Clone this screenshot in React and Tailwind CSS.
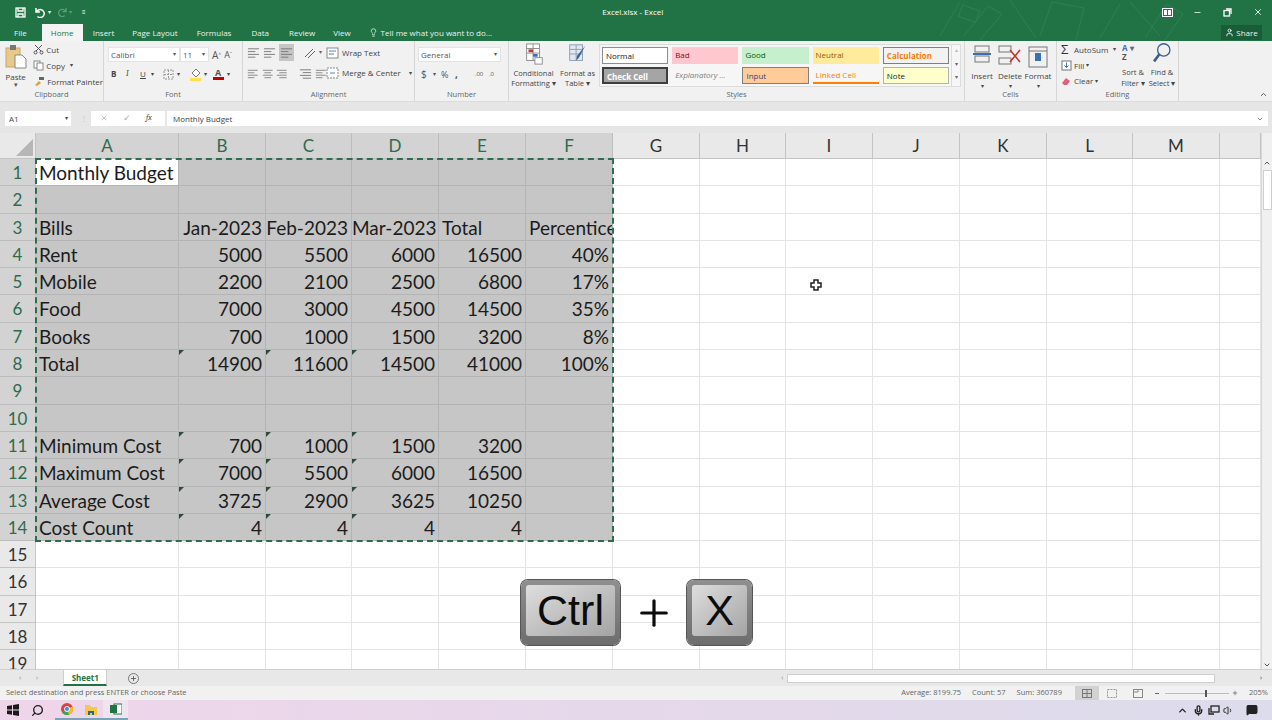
import React from "react";
import { Search, ChevronUp, ChevronDown, Lightbulb, User, Minus, X, Plus, Mic, Volume1, MessageSquare } from "lucide-react";

const ui = "font-['Open_Sans','Liberation_Sans',sans-serif]";

const cols = ["A", "B", "C", "D", "E", "F", "G", "H", "I", "J", "K", "L", "M", ""];

const rows = [
  ["Monthly Budget"],
  [],
  ["Bills", "Jan-2023", "Feb-2023", "Mar-2023", "!Total", "!Percentice"],
  ["Rent", "5000", "5500", "6000", "16500", "40%"],
  ["Mobile", "2200", "2100", "2500", "6800", "17%"],
  ["Food", "7000", "3000", "4500", "14500", "35%"],
  ["Books", "700", "1000", "1500", "3200", "8%"],
  ["Total", "^14900", "^11600", "^14500", "41000", "100%"],
  [],
  [],
  ["Minimum Cost", "^700", "^1000", "^1500", "3200"],
  ["Maximum Cost", "^7000", "^5500", "^6000", "16500"],
  ["Average Cost", "^3725", "^2900", "^3625", "10250"],
  ["Cost Count", "^4", "^4", "^4", "4"],
];

const tabs = [
  ["Insert", "ml-[10px]"],
  ["Page Layout", "ml-[18px]"],
  ["Formulas", "ml-[19px]"],
  ["Data", "ml-[20px]"],
  ["Review", "ml-[20px]"],
  ["View", "ml-[18px]"],
];

const styleCells = [
  ["Normal", "bg-white border border-[#8d8d8d] text-[#222]"],
  ["Bad", "bg-[#ffc7ce] text-[#9c0006]"],
  ["Good", "bg-[#c6efce] text-[#006100]"],
  ["Neutral", "bg-[#ffeb9c] text-[#9c5700]"],
  ["Calculation", "bg-[#f2f2f2] border border-[#7f7f7f] text-[#fa7d00] font-bold"],
  ["Check Cell", "bg-[#a5a5a5] border-2 border-[#3f3f3f] text-white font-bold"],
  ["Explanatory ...", "text-[#7f7f7f] italic"],
  ["Input", "bg-[#ffcc99] border border-[#7f7f7f] text-[#3f3f76]"],
  ["Linked Cell", "text-[#fa7d00] border-b-2 border-[#ff8001]"],
  ["Note", "bg-[#ffffcc] border border-[#b2b2b2] text-[#222]"],
];

const GroupLabel = ({ children }) => (
  <div className="relative h-[13px] shrink-0 text-center text-[7.5px] leading-[13px] text-[#666]">
    {children}
  </div>
);

const Group = ({ w, label, children, border = true }) => (
  <div className={`flex flex-col shrink-0 ${w} ${border ? "border-r border-[#d6d6d6]" : ""}`}>
    <div className="flex-1 min-h-0 flex">{children}</div>
    <GroupLabel>{label}</GroupLabel>
  </div>
);

const Lines = ({ kind }) => {
  const ys = [3, 6, 9, 12];
  const x = (i) => {
    if (kind === "left") return [1, 1, 1, 1][i];
    if (kind === "center") return [1, 3, 1, 3][i];
    return [1, 4, 1, 4][i];
  };
  return (
    <svg width="13" height="14" viewBox="0 0 14 15" stroke="#777" strokeWidth="1">
      {ys.map((y, i) => (
        <line key={y} x1={x(i)} x2={kind === "left" ? (i % 2 ? 9 : 13) : kind === "center" ? (i % 2 ? 11 : 13) : 13} y1={y} y2={y} />
      ))}
    </svg>
  );
};

const BigCells = ({ children }) => (
  <svg width="26" height="26" viewBox="0 0 26 26" fill="none" stroke="#777" strokeWidth="1">
    {children}
  </svg>
);

const Clipboard = () => (
  <Group w="w-[104px]" label="Clipboard">
    <div className="w-[32px] flex flex-col items-center pt-[3px]">
      <svg width="22" height="25" viewBox="0 0 22 25">
        <rect x="1" y="4" width="14" height="19" fill="#e8c98c" stroke="#c9a868" />
        <rect x="5" y="1" width="6" height="5" fill="#777" />
        <path d="M10 11h7l4 4v9H10z" fill="#fff" stroke="#888" />
      </svg>
      <div className="mt-[3px] text-[8px] leading-[9px] text-[#444]">Paste</div>
      <div className="text-[7px] leading-[7px] text-[#555]">▾</div>
    </div>
    <div className="flex flex-col text-[8px] text-[#444] pt-[2px] pl-[2px] gap-[3px]">
      <div className="flex items-center gap-[2px] h-[13px]">
        <svg width="11" height="11" viewBox="0 0 11 11" fill="none" stroke="#555">
          <path d="M2 1l6 6M9 1L3 7" />
          <circle cx="2.5" cy="8.5" r="1.5" />
          <circle cx="8.5" cy="8.5" r="1.5" />
        </svg>
        Cut
      </div>
      <div className="flex items-center gap-[2px] h-[13px]">
        <svg width="11" height="11" viewBox="0 0 11 11" fill="#fff" stroke="#888">
          <rect x="1" y="1" width="6" height="7" />
          <rect x="4" y="3" width="6" height="7" />
        </svg>
        Copy <span className="ml-[3px] text-[6px]">▾</span>
      </div>
      <div className="flex items-center gap-[2px] h-[13px] pl-[1px] whitespace-nowrap">
        <svg width="11" height="11" viewBox="0 0 11 11">
          <path d="M1 9l4-4 2 2-4 3z" fill="#d9a441" />
          <rect x="5" y="1" width="5" height="3" fill="#666" />
        </svg>
        Format Painter
      </div>
    </div>
  </Group>
);

const Font = () => (
  <Group w="w-[139px]" label="Font">
    <div className="flex flex-col pl-[4px] pt-[6px] gap-[4px] text-[#555]">
      <div className="flex items-center h-[15px]">
        <div className="w-[72px] h-[15px] bg-white border border-[#e3e3e3] text-[8px] leading-[13px] pl-[2px] flex justify-between pr-[3px]">
          Calibri <span className="text-[6px]">▾</span>
        </div>
        <div className="w-[29px] h-[15px] bg-white border border-[#e3e3e3] text-[8px] leading-[13px] pl-[2px] flex justify-between pr-[3px]">
          11 <span className="text-[6px]">▾</span>
        </div>
        <span className="ml-[3px] text-[10px] leading-none">A<sup className="text-[5px]">^</sup></span>
        <span className="ml-[3px] text-[9px] leading-none">A<sup className="text-[5px]">ˇ</sup></span>
      </div>
      <div className="flex items-center h-[16px] pl-[3px] text-[8px] text-[#444]">
        <b className="w-[15px]">B</b>
        <i className="w-[14px] font-serif">I</i>
        <u className="w-[11px]">U</u>
        <span className="w-[12px] text-[6px]">▾</span>
        <svg width="11" height="11" viewBox="0 0 11 11" fill="none" stroke="#999" strokeDasharray="2 1">
          <rect x="1" y="1" width="9" height="9" />
          <path d="M1 5.5h9M5.5 1v9" />
        </svg>
        <span className="w-[16px] pl-[3px] text-[6px]">▾</span>
        <svg width="12" height="13" viewBox="0 0 12 13">
          <path d="M6 1l4 4-4 4-4-4z" fill="#fff" stroke="#777" />
          <rect y="10" width="11" height="3" fill="#ffe14d" />
        </svg>
        <span className="w-[10px] pl-[2px] text-[6px]">▾</span>
        <span className="flex flex-col items-center w-[12px] text-[9px] leading-[9px] font-bold text-[#555]">
          A<span className="block w-[11px] h-[3px] bg-[#c00000]" />
        </span>
        <span className="pl-[3px] text-[6px]">▾</span>
      </div>
    </div>
  </Group>
);

const Alignment = () => (
  <Group w="w-[172px]" label="Alignment">
    <div className="flex flex-col pl-[4px] pt-[3px] gap-[4px] w-[83px]">
      <div className="flex items-center gap-[3px] h-[17px]">
        <Lines kind="left" />
        <Lines kind="left" />
        <div className="w-[15px] h-[17px] bg-[#c6c6c6] flex items-center justify-center">
          <Lines kind="left" />
        </div>
        <span className="ml-[7px] flex items-center text-[#666]">
          <svg width="13" height="12" viewBox="0 0 13 12" fill="none" stroke="#666">
            <path d="M1 10l8-8M4 11l7-7" />
          </svg>
          <span className="text-[6px] ml-[2px]">▾</span>
        </span>
      </div>
      <div className="flex items-center gap-[3px] h-[17px]">
        <Lines kind="left" />
        <Lines kind="center" />
        <Lines kind="right" />
        <span className="ml-[8px]"><Lines kind="right" /></span>
        <Lines kind="left" />
      </div>
    </div>
    <div className="flex flex-col pt-[5px] gap-[6px] text-[8px] text-[#444] whitespace-nowrap">
      <div className="flex items-center gap-[3px] h-[14px]">
        <svg width="13" height="12" viewBox="0 0 13 12" fill="#fff" stroke="#888">
          <rect x="1" y="1" width="11" height="10" />
          <path d="M3 4h7M3 7h5" stroke="#4a86c5" />
        </svg>
        Wrap Text
      </div>
      <div className="flex items-center gap-[3px] h-[14px]">
        <svg width="13" height="12" viewBox="0 0 13 12" fill="#fff" stroke="#888">
          <rect x="1" y="1" width="11" height="10" strokeDasharray="2 1" />
          <path d="M4 6h5" stroke="#4a86c5" />
        </svg>
        Merge &amp; Center <span className="ml-[5px] text-[6px]">▾</span>
      </div>
    </div>
  </Group>
);

const NumberGroup = () => (
  <Group w="w-[94px]" label="Number">
    <div className="flex flex-col pl-[3px] pt-[6px] gap-[5px] text-[#555]">
      <div className="w-[83px] h-[15px] bg-white border border-[#e3e3e3] text-[8px] leading-[13px] pl-[2px] pr-[3px] flex justify-between">
        General <span className="text-[6px]">▾</span>
      </div>
      <div className="flex items-center h-[15px] pl-[3px] text-[10px]">
        <span className="w-[12px]">$</span>
        <span className="w-[8px] text-[6px]">▾</span>
        <span className="w-[14px] text-[9px]">%</span>
        <span className="w-[20px] text-[10px] font-bold">,</span>
        <span className="w-[14px] text-[6px] tracking-tight">.00</span>
        <span className="text-[6px] tracking-tight">.0</span>
      </div>
    </div>
  </Group>
);

const Styles = () => (
  <Group w="w-[456px]" label="Styles">
    <div className="w-[49px] flex flex-col items-center pt-[2px] text-[7.5px] leading-[10px] text-[#444] text-center">
      <svg width="20" height="24" viewBox="0 0 20 24" fill="#fff" stroke="#888">
        <rect x="2" y="1" width="14" height="18" />
        <path d="M2 6h14M2 11h14M9 1v18" />
        <rect x="4" y="7" width="5" height="3" fill="#c0392b" stroke="none" />
        <rect x="9" y="12" width="5" height="3" fill="#3b6fb5" stroke="none" />
        <rect x="11" y="16" width="8" height="7" fill="#fff" />
      </svg>
      <div className="mt-[3px] whitespace-nowrap">Conditional</div>
      <div className="whitespace-nowrap">Formatting ▾</div>
    </div>
    <div className="w-[39px] flex flex-col items-center pt-[2px] text-[7.5px] leading-[10px] text-[#444] text-center">
      <svg width="21" height="24" viewBox="0 0 21 24" fill="#dfe8f3" stroke="#8a9bb0">
        <rect x="2" y="2" width="14" height="17" />
        <path d="M2 7h14M2 12h14M9 2v17" />
        <path d="M19 3l-7 13-3 3 1-5z" fill="#3b5f8f" stroke="none" />
      </svg>
      <div className="mt-[3px] whitespace-nowrap">Format as</div>
      <div className="whitespace-nowrap">Table ▾</div>
    </div>
    <div className="ml-[2px] mt-[3px] mb-[1px] w-[362px] flex border border-[#dcdcdc] bg-[#f6f6f6]">
      <div className="flex-1 grid grid-cols-5 grid-rows-2 gap-x-[4px] gap-y-[3px] p-[2px]">
        {styleCells.map(([name, cls]) => (
          <div key={name} className={`text-[8px] leading-[15px] pl-[3px] whitespace-nowrap overflow-hidden ${cls}`}>
            {name}
          </div>
        ))}
      </div>
      <div className="w-[9px] flex flex-col border-l border-[#dcdcdc] text-[6px] text-center text-[#666] leading-[11px]">
        <span className="flex-1 text-[#bbb]">▴</span>
        <span className="flex-1">▾</span>
        <span className="flex-1">▾</span>
      </div>
    </div>
  </Group>
);

const CellBtn = ({ label, children }) => (
  <div className="w-[28px] flex flex-col items-center pt-[3px] text-[8px] leading-[11px] text-[#444]">
    <div className="h-[26px]">{children}</div>
    <div>{label}</div>
    <div className="text-[6px] leading-[10px]">▾</div>
  </div>
);

const Cells = () => (
  <Group w="w-[92px]" label="Cells">
    <div className="flex pl-[3px]">
      <CellBtn label="Insert">
        <BigCells>
          <rect x="6" y="2" width="14" height="6" />
          <rect x="6" y="12" width="14" height="6" />
          <path d="M4 10h18" stroke="#3b6fb5" strokeWidth="2" />
        </BigCells>
      </CellBtn>
      <CellBtn label="Delete">
        <BigCells>
          <rect x="2" y="2" width="12" height="6" />
          <rect x="2" y="14" width="12" height="6" />
          <path d="M13 6l10 12M23 6L13 18" stroke="#c0392b" strokeWidth="1.6" />
        </BigCells>
      </CellBtn>
      <CellBtn label="Format">
        <BigCells>
          <rect x="4" y="3" width="18" height="20" />
          <path d="M4 7h18" />
          <rect x="10" y="9" width="6" height="8" fill="#3b6fb5" stroke="none" />
        </BigCells>
      </CellBtn>
    </div>
  </Group>
);

const Editing = () => (
  <Group w="w-[122px]" label="Editing">
    <div className="flex flex-col pl-[4px] pt-[2px] w-[62px] text-[8px] text-[#444] gap-[2px]">
      <div className="flex items-center h-[14px] whitespace-nowrap">
        <span className="text-[13px] leading-none w-[13px] text-[#333]">Σ</span>AutoSum
        <span className="ml-[5px] text-[6px]">▾</span>
      </div>
      <div className="flex items-center h-[14px] gap-[2px]">
        <svg width="11" height="11" viewBox="0 0 11 11" fill="#fff" stroke="#777">
          <rect x="1" y="1" width="9" height="9" />
          <path d="M5.5 2.5v5M3.5 5.5l2 2 2-2" stroke="#3b6fb5" />
        </svg>
        Fill <span className="text-[6px]">▾</span>
      </div>
      <div className="flex items-center h-[14px] gap-[2px]">
        <svg width="11" height="11" viewBox="0 0 11 11">
          <path d="M1 7l4-5 4 3-3 4H3z" fill="#e0607a" />
        </svg>
        Clear <span className="text-[6px]">▾</span>
      </div>
    </div>
    <div className="w-[28px] flex flex-col items-center pt-[2px] text-[7.5px] leading-[10.5px] text-[#444]">
      <div className="h-[24px] w-[22px] text-[8px] leading-[9px] font-bold">
        <span className="text-[#3b6fb5]">A</span>
        <span className="text-[#666]"> ▾</span>
        <br />
        <span className="text-[#555]">Z</span>
      </div>
      <div className="mt-[3px] whitespace-nowrap">Sort &amp;</div>
      <div className="whitespace-nowrap">Filter ▾</div>
    </div>
    <div className="w-[30px] flex flex-col items-center pt-[1px] text-[7.5px] leading-[10.5px] text-[#444]">
      <svg width="22" height="25" viewBox="0 0 22 25" fill="none" stroke="#3b5f8f">
        <circle cx="13" cy="9" r="7" strokeWidth="1.5" />
        <path d="M8 14l-6 8" strokeWidth="3" />
      </svg>
      <div className="mt-[3px] whitespace-nowrap">Find &amp;</div>
      <div className="whitespace-nowrap">Select ▾</div>
    </div>
  </Group>
);

const Doodles = () => (
  <svg width="300" height="41" viewBox="0 0 300 41" fill="none" stroke="#2c8052" strokeWidth="1" className="absolute right-[42px] top-0">
    <path d="M10 36L30 2M34 36L58 6l14 8-22 26M80 0l26 38M110 36l12-34 32 6-8 32M170 38L190 4M200 2l30 34M215 38l22-34 16 10-18 26" />
    <rect x="30" y="8" width="18" height="12" transform="rotate(20 40 14)" />
  </svg>
);

const TitleBar = () => (
  <div className="relative h-[41px] bg-[#217346] text-white shrink-0">
    <Doodles />
    <div className="relative flex items-center h-[24px]">
      <svg width="11" height="11" viewBox="0 0 11 11" fill="none" stroke="#fff" strokeWidth="1.3" className="ml-[15px]">
        <rect x="1" y="1" width="9" height="9" />
        <path d="M3 1v3h5V1M3 10V7h5v3" />
      </svg>
      <svg width="11" height="11" viewBox="0 0 11 11" fill="none" stroke="#fff" strokeWidth="1.5" className="ml-[9px]">
        <path d="M1 1v4h4M1.500 5a4 4 0 1 1 1 4.500" />
      </svg>
      <span className="ml-[2px] text-[6px]">▾</span>
      <svg width="10" height="10" viewBox="0 0 11 11" fill="none" stroke="#5f9e7d" strokeWidth="1.3" className="ml-[6px]">
        <path d="M10 1v4H6M9.500 5a4 4 0 1 0-1 4.500" />
      </svg>
      <span className="ml-[2px] text-[6px] text-[#5f9e7d]">▾</span>
      <span className="ml-[10px] text-[6px]">≡</span>
      <div className="flex-1 text-center text-[8px] pl-[28px] whitespace-nowrap">Excel.xlsx - Excel</div>
      <div className="flex items-center w-[120px]">
        <svg width="11" height="9" viewBox="0 0 11 9" fill="none" stroke="#fff" className="ml-[10px]">
          <rect x="0.500" y="0.500" width="10" height="8" />
          <rect x="2" y="2" width="3" height="5" fill="#fff" stroke="none" />
          <rect x="6" y="2" width="3" height="5" fill="#fff" stroke="none" />
        </svg>
        <Minus size={9} strokeWidth={2} className="ml-[20px]" />
        <svg width="9" height="9" viewBox="0 0 9 9" fill="none" stroke="#fff" strokeWidth="1.300" className="ml-[21px]">
          <rect x="1" y="2.500" width="5.500" height="5.500" />
          <path d="M3 1h5v5" />
        </svg>
        <X size={10} strokeWidth={2} className="ml-[21px]" />
      </div>
    </div>
    <div className="relative flex items-center h-[17px] text-[8px] text-[#e8f2ec] whitespace-nowrap">
      <span className="ml-[14px]">File</span>
      <span className="ml-[15px] w-[41px] h-[17px] bg-[#f3f3f3] text-[#217346] text-center leading-[17px]">Home</span>
      {tabs.map(([t, m]) => (
        <span key={t} className={m}>{t}</span>
      ))}
      <span className="ml-[18px] flex items-center gap-[3px]">
        <Lightbulb size={9} />
        Tell me what you want to do...
      </span>
      <span className="ml-auto mr-[10px] w-[41px] h-[15px] bg-[#1a5c38] flex items-center justify-center gap-[2px]">
        <User size={9} strokeWidth={2.5} />
        Share
      </span>
    </div>
  </div>
);

const Ribbon = () => (
  <div className="relative h-[61px] shrink-0 bg-[#f1f1f1] flex border-b border-[#dcdcdc]">
    <Clipboard />
    <Font />
    <Alignment />
    <NumberGroup />
    <Styles />
    <Cells />
    <Editing />
    <ChevronUp size={9} strokeWidth={2.5} className="absolute right-[4px] bottom-[2px] text-[#555]" />
  </div>
);

const FormulaBar = () => (
  <div className="h-[31px] shrink-0 bg-[#e6e6e6] flex items-center pl-[5px] pr-[4px] pt-[1px] text-[8px] text-[#444]">
    <div className="w-[66px] h-[15px] bg-white leading-[15px] pl-[4px] pr-[3px] flex justify-between">
      A1 <span className="text-[6px]">▾</span>
    </div>
    <span className="ml-[9px] w-[11px] text-[#c4c4c4]">⋮</span>
    <div className="w-[74px] h-[15px] bg-white flex items-center text-[#aaa] pl-[9px] gap-[15px]">
      <X size={8} />
      <span className="text-[9px]">✓</span>
      <i className="text-[#555] font-serif text-[8px] whitespace-nowrap">fx</i>
    </div>
    <div className="ml-[2px] flex-1 h-[15px] bg-white leading-[15px] pl-[6px] pr-[4px] flex justify-between">
      Monthly Budget
      <ChevronDown size={8} className="mt-[4px] text-[#555]" />
    </div>
  </div>
);

const DataCell = ({ value, row, col }) => {
  const selected = row < 14 && col < 6;
  const white = row === 0 && col === 0;
  let text = value || "";
  const tick = text.startsWith("^");
  const left = col === 0 || text.startsWith("!");
  text = text.replace(/^[\^!]/, "");
  const fill = white ? "bg-white" : selected ? "bg-[#c6c6c6]" : "bg-white";
  const line = selected ? "border-[#b4b4b4]" : "border-[#e4e4e4]";
  return (
    <div
      className={`relative min-w-0 overflow-hidden whitespace-nowrap border-r border-b ${fill} ${line} ${
        left ? "pl-[3px] text-left" : "pr-[3px] text-right"
      } text-[19px] leading-[28px] text-[#1c1c1c]`}
    >
      {text}
      {tick && <span className="absolute left-0 top-0 border-t-[5px] border-r-[5px] border-t-[#2d4a3b] border-r-transparent" />}
    </div>
  );
};

const Sheet = () => {
  const rowNums = Array.from({ length: 19 }, (_, i) => i);
  return (
    <div className="h-[536px] shrink-0 flex bg-white overflow-hidden">
      <div className="relative w-[1261px] shrink-0 grid grid-cols-[36px_143px_87px_86px_87px_87px_87px_87px_86px_87px_87px_87px_86px_87px_41px] grid-rows-[26px_repeat(19,27.3px)] overflow-hidden">
        <div className="bg-[#e9e9e9] border-r border-b border-[#c4c4c4] relative">
          <span className="absolute right-[2px] bottom-[2px] border-b-[17px] border-l-[17px] border-b-[#b6b6b6] border-l-transparent" />
        </div>
        {cols.map((c, i) => (
          <div
            key={c + i}
            className={`text-center text-[17px] leading-[26px] border-r border-b ${
              i < 6 ? "bg-[#d3d3d3] text-[#2f6b4f] border-[#bdbdbd]" : "bg-[#e9e9e9] text-[#333] border-[#c4c4c4]"
            }`}
          >
            {c}
          </div>
        ))}
        {rowNums.map((r) => (
          <React.Fragment key={r}>
            <div
              className={`text-center text-[17px] leading-[28px] border-r border-b ${
                r < 14 ? "bg-[#d3d3d3] text-[#2f6b4f] border-[#bdbdbd]" : "bg-[#e9e9e9] text-[#333] border-[#c4c4c4]"
              }`}
            >
              {r + 1}
            </div>
            {cols.map((c, i) => (
              <DataCell key={i} row={r} col={i} value={rows[r] ? rows[r][i] : ""} />
            ))}
          </React.Fragment>
        ))}
        <div className="absolute left-[35px] top-[25px] w-[579px] h-[384px] border-2 border-dashed border-[#2f6b4f] pointer-events-none" />
        <svg width="12" height="12" viewBox="0 0 12 12" className="absolute left-[810px] top-[146px]">
          <path d="M4 1h4v3h3v4H8v3H4V8H1V4h3z" fill="#fff" stroke="#222" strokeWidth="1.500" />
        </svg>
      </div>
      <div className="flex-1 bg-[#f0f0f0] flex flex-col items-center border-l border-[#d8d8d8] text-[#555]">
        <div className="h-[26px]" />
        <ChevronUp size={8} strokeWidth={3} />
        <div className="mt-[3px] w-[9px] h-[40px] bg-white border border-[#cfcfcf]" />
        <div className="flex-1" />
        <ChevronDown size={8} strokeWidth={3} />
      </div>
    </div>
  );
};

const KeyCap = ({ w, children }) => (
  <div
    className={`${w} h-[65px] rounded-[7px] bg-gradient-to-b from-[#8f8f8f] to-[#6d6d6d] p-[5px] pb-[9px] shadow-[0_0_0_1px_#555]`}
  >
    <div className="h-full rounded-[3px] bg-gradient-to-br from-[#dedede] to-[#a4a4a4] flex items-center justify-center font-['Liberation_Sans',sans-serif] text-[43px] leading-none text-[#0c0c0c]">
      {children}
    </div>
  </div>
);

const Keys = () => (
  <div className="absolute left-[521px] top-[580px] flex items-center">
    <KeyCap w="w-[99px]">Ctrl</KeyCap>
    <div className="w-[67px] flex justify-center text-[#0c0c0c]">
      <Plus size={42} strokeWidth={3.2} absoluteStrokeWidth />
    </div>
    <KeyCap w="w-[65px]">X</KeyCap>
  </div>
);

const SheetTabs = () => (
  <div className="h-[17px] shrink-0 bg-[#e8e8e8] flex items-center border-t border-[#cfcfcf] text-[#888]">
    <span className="ml-[19px] text-[7px]">‹</span>
    <span className="ml-[15px] text-[7px]">›</span>
    <div className="ml-[25px] w-[44px] h-[16px] bg-white text-[#217346] font-bold text-[8px] text-center leading-[15px] border-b-2 border-x border-[#217346] border-x-[#cfcfcf] self-start">
      Sheet1
    </div>
    <div className="ml-[21px] w-[11px] h-[11px] rounded-full border border-[#777] flex items-center justify-center text-[#555]">
      <Plus size={7} strokeWidth={3} />
    </div>
    <div className="ml-[642px] flex-1 flex items-center mr-[10px]">
      <span className="text-[7px] w-[6px]">‹</span>
      <div className="w-[428px] h-[9px] bg-white border border-[#cfcfcf]" />
      <div className="flex-1" />
      <span className="text-[7px] text-[#444]">›</span>
    </div>
  </div>
);

const StatusBar = () => (
  <div className="h-[14px] shrink-0 bg-[#f1f1f1] flex items-center text-[7.5px] text-[#666] whitespace-nowrap">
    <span className="ml-[6px]">Select destination and press ENTER or choose Paste</span>
    <span className="ml-auto">Average: 8199.75</span>
    <span className="ml-[11px]">Count: 57</span>
    <span className="ml-[11px]">Sum: 360789</span>
    <div className="ml-[13px] w-[24px] h-[14px] bg-[#d2d2d2] flex items-center justify-center">
      <svg width="10" height="9" viewBox="0 0 10 9" fill="none" stroke="#777">
        <rect x="0.500" y="0.500" width="9" height="8" />
        <path d="M5 0v9M0 4.500h10" />
      </svg>
    </div>
    <svg width="10" height="9" viewBox="0 0 10 9" fill="none" stroke="#999" className="ml-[8px]">
      <rect x="0.500" y="0.500" width="9" height="8" strokeDasharray="2 1" />
    </svg>
    <svg width="10" height="9" viewBox="0 0 10 9" fill="none" stroke="#888" className="ml-[16px]">
      <rect x="0.500" y="0.500" width="9" height="8" />
      <path d="M0 3h5M5 0v3" />
    </svg>
    <span className="ml-[12px] w-[4px] h-[1px] bg-[#666]" />
    <div className="relative ml-[6px] w-[64px] h-[1px] bg-[#bdbdbd]">
      <span className="absolute left-[40px] -top-[3px] w-[2px] h-[7px] bg-[#555]" />
    </div>
    <Plus size={6} strokeWidth={3} className="ml-[3px]" />
    <span className="ml-[11px] mr-[4px]">205%</span>
  </div>
);

const Taskbar = () => (
  <div className="h-[20px] shrink-0 bg-gradient-to-r from-[#efd5ea] to-[#dcdcec] flex items-center text-[#222]">
    <svg width="12" height="12" viewBox="0 0 12 12" fill="#1a1a1a" className="ml-[7px]">
      <path d="M0 2l5-.7V5.600H0zM6 1.100L12 0v5.600H6zM0 6.400h5v4.300l-5-.7zM6 6.400h6V12l-6-1z" />
    </svg>
    <Search size={13} strokeWidth={2.5} className="ml-[12px] -scale-x-100" />
    <div className="ml-[11px] w-[24px] h-[20px] flex items-center justify-center border-b-2 border-[#7aa3b8]">
      <svg width="12" height="12" viewBox="0 0 12 12">
        <circle cx="6" cy="6" r="6" fill="#d9463e" />
        <path d="M6 6L1 9a6 6 0 0 0 7 2.700z" fill="#3aa757" />
        <path d="M6 6l5.500-2.400A6 6 0 0 1 8 11.700z" fill="#f4c20d" />
        <circle cx="6" cy="6" r="2.500" fill="#4285f4" stroke="#fff" />
      </svg>
    </div>
    <div className="w-[24px] h-[20px] flex items-center justify-center border-b-2 border-[#7aa3b8]">
      <svg width="12" height="11" viewBox="0 0 12 11">
        <path d="M0 1h5l1 2h6v8H0z" fill="#f2c94c" />
        <path d="M3 7h6v4H7V9H5v2H3z" fill="#2f6b7e" />
      </svg>
    </div>
    <div className="w-[25px] h-[20px] bg-[#f0e4f0] flex items-center justify-center border-b-2 border-[#7aa3b8]">
      <svg width="12" height="12" viewBox="0 0 12 12">
        <rect x="4" y="1" width="8" height="10" fill="#fff" stroke="#217346" />
        <rect y="2" width="7" height="8" fill="#217346" />
      </svg>
    </div>
    <ChevronUp size={11} strokeWidth={3} className="ml-auto" />
    <Mic size={11} strokeWidth={3} className="ml-[5px]" />
    <svg width="12" height="10" viewBox="0 0 12 10" fill="none" stroke="#222" strokeWidth="1.300" className="ml-[4px]">
      <rect x="3" y="1" width="8" height="6" />
      <path d="M1 3v6h5" />
    </svg>
    <Volume1 size={11} className="ml-[3px]" />
    <MessageSquare size={12} fill="#222" className="ml-[12px] mr-[14px]" />
  </div>
);

export default function App() {
  return (
    <div className={`relative w-[1272px] h-[720px] overflow-hidden flex flex-col bg-white ${ui}`}>
      <TitleBar />
      <Ribbon />
      <FormulaBar />
      <div className="font-['Lato','Liberation_Sans',sans-serif]">
        <Sheet />
      </div>
      <SheetTabs />
      <StatusBar />
      <Taskbar />
      <Keys />
    </div>
  );
}
